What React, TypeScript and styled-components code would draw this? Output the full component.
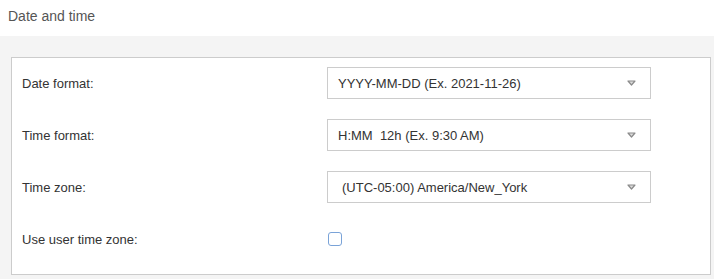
import React from "react";
import styled, { createGlobalStyle } from "styled-components";

const GlobalStyle = createGlobalStyle`
  html, body {
    margin: 0;
    padding: 0;
    background: #f4f4f4;
    font-family: "Liberation Sans", Arial, sans-serif;
  }
`;

const Page = styled.div`
  width: 714px;
  height: 279px;
  display: flex;
  flex-direction: column;
  background: #f4f4f4;
`;

const Header = styled.div`
  height: 36px;
  background: #ffffff;
  display: flex;
  align-items: center;
  padding: 0 8px 4px 8px;
  box-sizing: border-box;
  font-size: 14px;
  color: #555555;
`;

const Body = styled.div`
  flex: 1;
  padding: 21px 3px 0 11px;
`;

const Panel = styled.div`
  background: #ffffff;
  border: 1px solid #cccccc;
  padding: 9px 10px 19px 10px;
  display: flex;
  flex-direction: column;
  gap: 20px;
`;

const Row = styled.div`
  display: grid;
  grid-template-columns: 305px 324px;
  align-items: center;
  height: 32px;
`;

const Label = styled.span`
  font-size: 13px;
  color: #333333;
`;

const Select = styled.div<{ $indent?: number }>`
  height: 32px;
  box-sizing: border-box;
  border: 1px solid #cccccc;
  display: flex;
  align-items: center;
  justify-content: space-between;
  padding: 0 14px 0 ${(p) => 10 + (p.$indent ?? 0)}px;
  font-size: 13px;
  color: #333333;
  white-space: pre;
`;

const Caret = () => (
  <svg width="9" height="6" viewBox="0 0 9 6">
    <path d="M1 1 L8 1 L4.5 5 Z" fill="#dcdcdc" stroke="#8a8a8a" strokeWidth="1.2" strokeLinejoin="round" />
  </svg>
);

const Checkbox = styled.span`
  width: 14px;
  height: 14px;
  box-sizing: border-box;
  border: 1px solid #7aa3d8;
  border-radius: 3px;
  background: #ffffff;
  margin-left: 1px;
`;

const selects = [
  { label: "Date format:", value: "YYYY-MM-DD (Ex. 2021-11-26)", indent: 0 },
  { label: "Time format:", value: "H:MM  12h (Ex. 9:30 AM)", indent: 0 },
  { label: "Time zone:", value: "(UTC-05:00) America/New_York", indent: 4 },
];

export default function App() {
  return (
    <Page>
      <GlobalStyle />
      <Header>Date and time</Header>
      <Body>
        <Panel>
          {selects.map((s) => (
            <Row key={s.label}>
              <Label>{s.label}</Label>
              <Select $indent={s.indent}>
                <span>{s.value}</span>
                <Caret />
              </Select>
            </Row>
          ))}
          <Row>
            <Label>Use user time zone:</Label>
            <Checkbox />
          </Row>
        </Panel>
      </Body>
    </Page>
  );
}
